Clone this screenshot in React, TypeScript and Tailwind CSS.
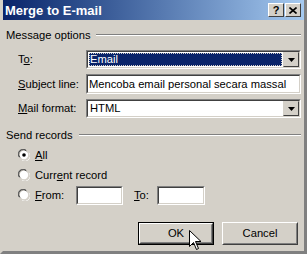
import React from "react";

const font = { fontFamily: '"Liberation Sans", Arial, sans-serif' };

function Sunken({ className = "", children }: { className?: string; children?: React.ReactNode }) {
  return (
    <div className={`border border-t-[#808080] border-l-[#808080] border-b-white border-r-white ${className}`}>
      <div className="h-full w-full border border-t-[#404040] border-l-[#404040] border-b-[#d4d0c8] border-r-[#d4d0c8] bg-white flex items-center">
        {children}
      </div>
    </div>
  );
}

function DropBtn() {
  return (
    <div className="h-full w-[16px] bg-[#d4d0c8] border border-t-[#d4d0c8] border-l-[#d4d0c8] border-b-[#404040] border-r-[#404040] flex items-center justify-center">
      <svg width="7" height="4" viewBox="0 0 7 4">
        <path d="M0 0h7L3.5 4z" fill="#000" />
      </svg>
    </div>
  );
}

function Radio({ checked }: { checked?: boolean }) {
  return (
    <svg width="12" height="12" viewBox="0 0 12 12" className="shrink-0">
      <path d="M1 8A5 5 0 0 1 8 1" stroke="#808080" strokeWidth="1" fill="none" />
      <path d="M2 8.5A4 4 0 0 1 8.5 2" stroke="#404040" strokeWidth="1" fill="none" />
      <circle cx="6" cy="6" r="4.2" fill="#fff" />
      <path d="M11 4A5 5 0 0 1 4 11" stroke="#fff" strokeWidth="1" fill="none" />
      <path d="M10 3.5A4 4 0 0 1 3.5 10" stroke="#d4d0c8" strokeWidth="1" fill="none" />
      {checked && <circle cx="6" cy="6" r="1.8" fill="#000" />}
    </svg>
  );
}

function Btn({ children, def }: { children: React.ReactNode; def?: boolean }) {
  return (
    <div className={`w-[76px] h-[23px] ${def ? "border border-black" : ""}`}>
      <div className="h-full w-full border border-t-white border-l-white border-b-[#404040] border-r-[#404040]">
        <div className="h-full w-full border border-t-[#d4d0c8] border-l-[#d4d0c8] border-b-[#808080] border-r-[#808080] flex items-center justify-center text-black">
          {children}
        </div>
      </div>
    </div>
  );
}

function TitleBtn({ children }: { children: React.ReactNode }) {
  return (
    <div className="w-[16px] h-[14px] bg-[#d4d0c8] border border-t-white border-l-white border-b-[#404040] border-r-[#404040] flex items-center justify-center text-[11px] font-bold leading-none text-black">
      {children}
    </div>
  );
}

export default function App() {
  return (
    <div className="w-[307px] h-[254px] bg-[#d4d0c8] relative overflow-hidden text-black text-[11.2px]" style={font}>
      <div className="h-full w-full border-[3px] border-t-0 border-[#d4d0c8] border-r-[#808080] border-b-[#808080] flex flex-col">
        {/* Title bar */}
        <div className="h-[20px] bg-gradient-to-r from-[#0a246a] to-[#a6caf0] flex items-center pl-[2px] pr-[3px]">
          <span className="text-white font-bold text-[13px] leading-none">Merge to E-mail</span>
          <div className="ml-auto flex gap-[1px]">
            <TitleBtn>?</TitleBtn>
            <TitleBtn>
              <svg width="8" height="7" viewBox="0 0 8 7"><path d="M0.5 0.5L7.5 6.5M7.5 0.5L0.5 6.5" stroke="#000" strokeWidth="1.6" /></svg>
            </TitleBtn>
          </div>
        </div>

        {/* Message options */}
        <div className="flex items-center mt-[8px] pl-[3px] pr-[3px] h-[14px]">
          <span className="whitespace-nowrap">Message options</span>
          <div className="ml-[5px] flex-1 border-t border-t-[#808080] border-b border-b-white h-0" />
        </div>

        <div className="flex flex-col gap-[5px] mt-[8px] pr-[3px]">
          <div className="flex items-center h-[19px]">
            <span className="w-[83px] pl-[15px]">T<u>o</u>:</span>
            <Sunken className="flex-1 h-[19px]">
              <div className="flex-1 h-full p-[1px]">
                <div className="h-full bg-[#0a246a] text-white flex items-center pl-[1px] outline outline-1 outline-dotted outline-[#d4d0c8] -outline-offset-1">Email</div>
              </div>
              <DropBtn />
            </Sunken>
          </div>
          <div className="flex items-center h-[20px]">
            <span className="w-[83px] pl-[15px]"><u>S</u>ubject line:</span>
            <Sunken className="flex-1 h-[20px]">
              <span className="pl-[1px] whitespace-nowrap">Mencoba email personal secara massal</span>
            </Sunken>
          </div>
          <div className="flex items-center h-[19px]">
            <span className="w-[83px] pl-[15px]"><u>M</u>ail format:</span>
            <Sunken className="flex-1 h-[19px]">
              <span className="flex-1 pl-[2px]">HTML</span>
              <DropBtn />
            </Sunken>
          </div>
        </div>

        {/* Send records */}
        <div className="flex items-center mt-[10px] pl-[3px] pr-[3px] h-[14px]">
          <span className="whitespace-nowrap">Send records</span>
          <div className="ml-[6px] flex-1 border-t border-t-[#808080] border-b border-b-white h-0" />
        </div>

        <div className="flex flex-col mt-[3px] pl-[15px]">
          <div className="flex items-center gap-[5px] h-[20px]">
            <Radio checked />
            <span><u>A</u>ll</span>
          </div>
          <div className="flex items-center gap-[5px] h-[20px]">
            <Radio />
            <span>Curr<u>e</u>nt record</span>
          </div>
          <div className="flex items-center h-[20px]">
            <Radio />
            <span className="ml-[5px] w-[41px]"><u>F</u>rom:</span>
            <Sunken className="w-[47px] h-[19px]" />
            <span className="ml-[11px] w-[23px]"><u>T</u>o:</span>
            <Sunken className="w-[48px] h-[19px]" />
          </div>
        </div>

        <div className="flex justify-end gap-[8px] mt-[17px] pr-[6px]">
          <Btn def>OK</Btn>
          <Btn>Cancel</Btn>
        </div>
      </div>

      {/* Mouse cursor */}
      <svg className="absolute left-[189px] top-[230px]" width="13" height="24" viewBox="0 0 13 24">
        <path d="M0.5 0.5V16.5L4.5 12.5L7.5 19.5L9.5 18.5L6.5 11.5H12L0.5 0.5Z" fill="#fff" stroke="#000" strokeWidth="1" strokeLinejoin="miter" />
      </svg>
    </div>
  );
}
